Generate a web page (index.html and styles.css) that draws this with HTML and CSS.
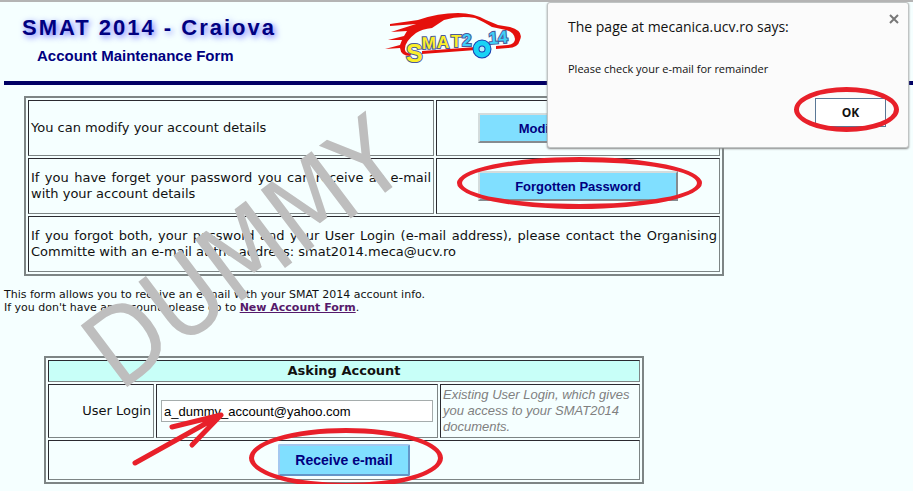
FILE: index.html
```
<!DOCTYPE html>
<html lang="en">

<head>
<meta charset="utf-8">
<title>SMAT 2014 - Account Maintenance Form</title>
<link rel="stylesheet" href="styles.css">
</head>

<body>

<header class="top">
	<div class="titles">
		<h1>SMAT 2014 - Craiova</h1>
		<h2>Account Maintenance Form</h2>
	</div>
	<svg class="logo" width="140" height="56" viewBox="0 0 140 56" role="img" aria-label="SMAT 2014">
		<g fill="#e5100c">
			<path d="M6 12 L34 8 Q54 1 74 1 Q90 1 102 8 L114 13 L126 15 Q140 19 136 28 Q134 36 124 36 L112 37 V34 L124 33 Q131 32 131 27 Q130 20 122 18 L108 15 Q98 9 91 6 Q76 3 60 8 L48 16 Q38 17 32 21 Q20 30 21 38 Q22 42 28 41 L26 44 Q17 44 16 36 L1 37 L16 33 L18 28 L4 28 L20 24 L23 19 L7 20 L32 12 L6 14 Z"/>
			<path d="M38 39 L92 35 V38 L38 42 Z"/>
		</g>
		<g class="yellow">
			<text x="22" y="50" font-size="25">S</text>
			<text x="38" y="37" font-size="17" transform="rotate(-2 38 37)">M</text>
			<text x="53" y="36" font-size="17">A</text>
			<text x="67" y="35" font-size="17">T</text>
		</g>
		<g class="blue">
			<text x="78" y="34" font-size="17">2</text>
			<text x="105" y="32" font-size="17" transform="rotate(-4 105 32)">14</text>
		</g>
		<circle cx="98" cy="37" r="6" fill="#b5eefa" stroke="#1a3fb0" stroke-width="7"/>
		<circle cx="98" cy="37" r="6" fill="none" stroke="#19d3f5" stroke-width="5"/>
	</svg>
</header>

<main>
<table class="options">
	<tr>
		<td>You can modify your account details</td>
		<td class="action"><button type="button" class="btn">Modify My Account</button></td>
	</tr>
	<tr>
		<td>If you have forget your password you can receive an e-mail with your account details</td>
		<td class="action"><span class="circled forgot"><button type="button" class="btn">Forgotten Password</button></span></td>
	</tr>
	<tr>
		<td colspan="2">If you forgot both, your password and your User Login (e-mail address), please contact the Organising Committe with an e-mail at the address: smat2014.meca@ucv.ro</td>
	</tr>
</table>

<p class="intro">This form allows you to receive an e-mail with your SMAT 2014 account info.<br>
If you don't have an account, please go to <a href="#">New Account Form</a>.</p>

<form action="#">
<table class="asking">
	<tr>
		<th colspan="3">Asking Account</th>
	</tr>
	<tr>
		<td class="name"><label for="login">User Login</label></td>
		<td class="field">
			<div class="pointed">
				<input type="text" id="login" name="login" value="a_dummy_account@yahoo.com">
				<svg class="arrow" width="96" height="58" viewBox="0 0 96 58" aria-hidden="true">
					<path d="M4 54 L90 6 M41 18 L90 6 L61 36"/>
				</svg>
			</div>
		</td>
		<td class="hint">Existing User Login, which gives you access to your SMAT2014 documents.</td>
	</tr>
	<tr>
		<td colspan="3" class="send"><span class="circled receive"><button type="submit" class="btn-send">Receive e-mail</button></span></td>
	</tr>
</table>
</form>
</main>

<div class="watermark">DUMMY</div>

<div class="dialog" role="dialog" aria-labelledby="dlgtitle">
	<div class="dialog-head">
		<h3 id="dlgtitle">The page at mecanica.ucv.ro says:</h3>
		<button type="button" class="close" aria-label="Close">
			<svg width="10" height="10" viewBox="0 0 10 10"><path d="M1 1 L9 9 M9 1 L1 9"/></svg>
		</button>
	</div>
	<p>Please check your e-mail for remainder</p>
	<div class="dialog-foot">
		<span class="circled ok"><button type="button" class="btn-ok">OK</button></span>
	</div>
</div>

</body>
</html>
```
FILE: styles.css
```
* {
	box-sizing: border-box;
}

body {
	position: relative;
	margin: 0;
	padding: 0 0 0 4px;
	border-top: 2px solid #b4b4b4;
	background-color: #f5ffff;
	font-family: "DejaVu Sans", Verdana, sans-serif;
	font-size: 13px;
	line-height: 16px;
	color: #111;
}

h1, h2, h3, p {
	margin: 0;
}

button {
	padding: 0;
	cursor: pointer;
}

/* header */

.top {
	display: flex;
	gap: 96px;
	height: 83px;
	padding: 10px 0 0 18px;
	border-bottom: 4px solid #000064;
	font-family: "Liberation Sans", Arial, sans-serif;
	color: #000080;
}

.titles {
	width: 266px;
	white-space: nowrap;
}

h1 {
	font-size: 22px;
	line-height: 32px;
	letter-spacing: 2px;
	text-shadow: 2px 2px 6px #6a6aff;
}

h2 {
	padding-left: 15px;
	font-size: 15px;
	line-height: 24px;
}

.logo text {
	font-family: "Liberation Sans", Arial, sans-serif;
	font-weight: bold;
	stroke: #4a5a9a;
	stroke-width: 2px;
	paint-order: stroke;
}

.yellow {
	fill: #fbee2a;
}

.blue {
	fill: #3fd0f7;
}

/* tables */

table {
	border: 2px solid #7d8585;
	border-spacing: 2px;
}

td, th {
	padding: 2px;
	border: 1px solid;
	border-color: #2a2a30 #7d8585 #7d8585 #2a2a30;
}

.options {
	width: 100%;
	max-width: 700px;
	margin: 11px 0 12px 20px;
	text-align: justify;
}

.options td {
	height: 56px;
}

.options .action {
	width: 284px;
	text-align: center;
}

.intro {
	font-size: 11px;
	line-height: 13px;
}

.intro a {
	font-weight: bold;
	color: #551a6b;
}

.asking {
	width: 100%;
	max-width: 600px;
	margin: 42px 0 0 40px;
}

.asking th {
	height: 22px;
	background-color: #c8fff8;
}

.name {
	width: 106px;
	text-align: right;
}

.field {
	height: 54px;
}

.field input {
	display: block;
	width: 100%;
	height: 22px;
	padding: 0 2px;
	border: 1px solid #a5acac;
	background-color: #fff;
	font-family: "Liberation Sans", Arial, sans-serif;
	font-size: 13px;
}

.hint {
	width: 200px;
	font-family: "Liberation Sans", Arial, sans-serif;
	font-style: italic;
	color: #808080;
}

.send {
	height: 40px;
	text-align: center;
}

/* buttons */

.btn, .btn-send {
	background-color: #80dfff;
	font-family: "Liberation Sans", Arial, sans-serif;
	font-weight: bold;
	color: #000080;
}

.btn {
	width: 200px;
	height: 30px;
	border: 2px solid;
	border-color: #d4dcdc #858c90 #858c90 #d4dcdc;
	font-size: 13px;
}

.btn-send {
	width: 132px;
	height: 32px;
	border: 2px solid;
	border-color: #a4c8f0 #6496c8 #6496c8 #a4c8f0;
	border-radius: 2px;
	font-size: 14px;
}

/* red marks */

.circled {
	position: relative;
	display: inline-block;
	vertical-align: middle;
}

.circled::after {
	content: "";
	position: absolute;
	border: 5px solid #e8202a;
	border-radius: 50%;
	pointer-events: none;
}

.forgot::after {
	inset: -14px -24px -8px -21px;
}

.receive::after {
	inset: -16px -33px -12px -29px;
}

.ok::after {
	inset: -11px -13px -5px -21px;
}

.pointed {
	position: relative;
	padding: 0 2px;
}

.arrow {
	position: absolute;
	left: -28px;
	top: 9px;
	fill: none;
	stroke: #e8202a;
	stroke-width: 5px;
	stroke-linecap: round;
	stroke-linejoin: round;
	pointer-events: none;
}

.watermark {
	position: absolute;
	left: 98px;
	top: 362px;
	font-family: "DejaVu Sans Condensed", "Liberation Sans", sans-serif;
	font-size: 106px;
	line-height: 0;
	color: #bebebe;
	transform: rotate(-37deg);
	transform-origin: 0 0;
	pointer-events: none;
}

/* message box */

.dialog {
	position: absolute;
	top: 0;
	right: 4px;
	width: 362px;
	padding: 8px 8px 20px 20px;
	border: 1px solid #c0c4c4;
	border-radius: 3px;
	background-color: #fbfbfb;
	box-shadow: 0 1px 2px #888;
	font-family: "Open Sans", "Segoe UI", sans-serif;
}

.dialog-head {
	display: flex;
	justify-content: space-between;
	align-items: flex-start;
}

.dialog h3 {
	font-size: 14px;
	font-weight: normal;
	line-height: 32px;
}

.close {
	width: 12px;
	height: 16px;
	border: 0;
	background: none;
}

.close svg {
	display: block;
	margin: auto;
	fill: none;
	stroke: #777;
	stroke-width: 2px;
}

.dialog p {
	padding: 16px 0;
	font-size: 11px;
	line-height: 20px;
}

.dialog-foot {
	padding: 3px 14px 0 0;
	text-align: right;
}

.btn-ok {
	display: block;
	width: 71px;
	height: 29px;
	border: 1px solid #5a7896;
	background-color: #fff;
	font-family: "Open Sans", "Segoe UI", sans-serif;
	font-size: 12px;
	font-weight: bold;
	color: #111;
}
```
